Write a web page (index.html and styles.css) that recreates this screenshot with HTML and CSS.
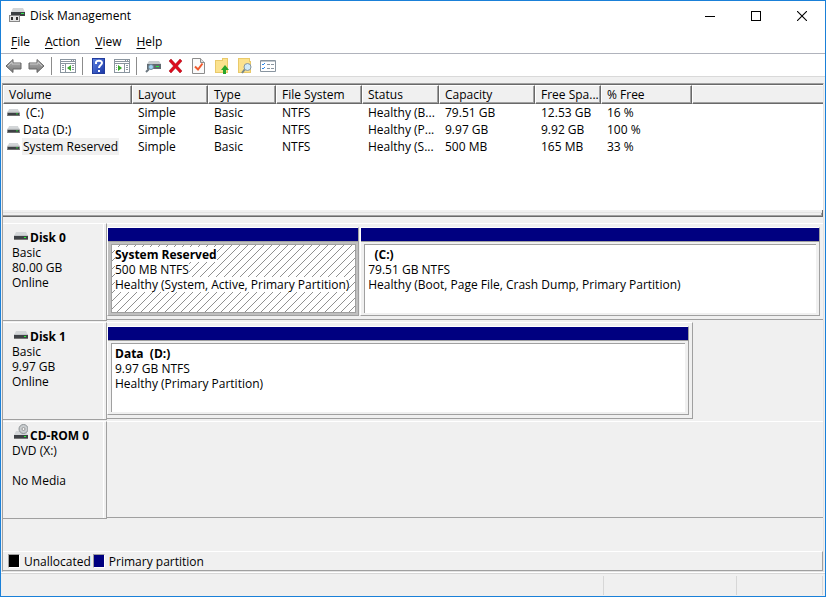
FILE: index.html
```html
<!DOCTYPE html>
<html lang="en">
<head>
<meta charset="utf-8">
<title>Disk Management</title>
<link rel="stylesheet" href="styles.css">
</head>
<body>
<svg class="defs" aria-hidden="true">
  <defs>
    <linearGradient id="arrow" x1="0" y1="0" x2="0" y2="1"><stop offset="0" stop-color="#b4b4b4"/><stop offset="1" stop-color="#777"/></linearGradient>
    <linearGradient id="blue" x1="0" y1="0" x2="1" y2="1"><stop offset="0" stop-color="#5a80e0"/><stop offset="1" stop-color="#1c39a8"/></linearGradient>
    <pattern id="hatch" width="8" height="8" patternUnits="userSpaceOnUse"><path d="M0 7h1v1H0zM1 6h1v1H1zM2 5h1v1H2zM3 4h1v1H3zM4 3h1v1H4zM5 2h1v1H5zM6 1h1v1H6zM7 0h1v1H7z" fill="#909090"/></pattern>
    <symbol id="drive" viewBox="0 0 14 8">
      <path d="M2 0h10l2 4H0z" fill="#d3d6d8"/>
      <path d="M0 4h14v4H0z" fill="#3e4145"/>
      <path d="M0 3h14v1H0z" fill="#c0c4c7"/>
      <path d="M0 7h14v1H0z" fill="#777"/>
      <path d="M10 5h2v1h-2z" fill="#20ff30"/>
    </symbol>
  </defs>
</svg>
<div class="window">
  <header class="titlebar">
    <svg class="app-icon" width="16" height="15" viewBox="0 0 16 15">
      <path d="M4 0h10l2 4H2z" fill="#d3d6d8"/><path d="M2 4h14v4H2z" fill="#3c4043"/><path d="M12 5h3v1h-3z" fill="#30e850"/>
      <path d="M0 7h11v7H0z" fill="#888"/><path d="M1 8h9v5H1z" fill="#e4e4e4"/><path d="M2 9h2v3H2zM7 9h2v3H7z" fill="#303030"/>
    </svg>
    <h1>Disk Management</h1>
    <div class="caption-buttons">
      <button aria-label="Minimize"><svg width="10" height="10"><path d="M0 5h10v1H0z"/></svg></button>
      <button aria-label="Maximize"><svg width="10" height="10"><path d="M0 0h10v10H0zM1 1v8h8V1z" fill-rule="evenodd"/></svg></button>
      <button aria-label="Close"><svg width="10" height="10"><path d="M0 0l10 10M10 0L0 10" fill="none" stroke="#000" stroke-width="1.1"/></svg></button>
    </div>
  </header>
  <nav class="menubar">
    <button><u>F</u>ile</button><button><u>A</u>ction</button><button><u>V</u>iew</button><button><u>H</u>elp</button>
  </nav>
  <div class="toolbar" role="toolbar">
    <button aria-label="Back"><svg width="17" height="16" viewBox="0 0 17 16"><path d="M1 8l7-6.500v3.500h8v6H8v3.500z" fill="url(#arrow)" stroke="#666"/><path d="M3 8l4-4v2h8" fill="none" stroke="#c8c8c8"/></svg></button>
    <button aria-label="Forward"><svg width="17" height="16" viewBox="0 0 17 16"><path d="M16 8L9 1.500v3.500H1v6h8v3.500z" fill="url(#arrow)" stroke="#666"/><path d="M2 6h8V4l4 4" fill="none" stroke="#c8c8c8"/></svg></button>
    <span class="separator"></span>
    <button aria-label="Show or hide console tree"><svg width="16" height="14" viewBox="0 0 16 14"><path d="M0 0h16v14H0z" fill="#8a959f"/><path d="M1 1h10v1H1zM12 1h1v1h-1zM14 1h1v1h-1zM1 3h14v1H1zM1 5h4v8H1zM6 5h9v8H6z" fill="#fff"/><path d="M2 6h2v1H2zM2 8h2v1H2zM2 10h2v1H2zM12 6h2v1h-2zM12 8h2v1h-2zM12 10h2v1h-2z" fill="#8a959f"/><path d="M11 6v6L7 9z" fill="#35a829"/></svg></button>
    <span class="separator"></span>
    <button aria-label="Help"><svg width="13" height="16" viewBox="0 0 13 16"><path d="M0 0h13v16H0z" fill="#233c9c"/><path d="M1 1h11v14H1z" fill="url(#blue)"/><path d="M4 6V4.500C4 2 10 2 10 5c0 2-3 2-3 5M7 12v2" fill="none" stroke="#fff" stroke-width="2"/></svg></button>
    <button aria-label="Show or hide action pane"><svg width="16" height="14" viewBox="0 0 16 14"><path d="M0 0h16v14H0z" fill="#8a959f"/><path d="M1 1h10v1H1zM12 1h1v1h-1zM14 1h1v1h-1zM1 3h14v1H1zM1 5h9v8H1zM11 5h4v8h-4z" fill="#fff"/><path d="M2 6h1v1H2zM2 8h1v1H2zM2 10h1v1H2zM12 6h2v1h-2zM12 8h2v1h-2zM12 10h2v1h-2z" fill="#8a959f"/><path d="M4 6v6l4-3z" fill="#35a829"/></svg></button>
    <span class="separator"></span>
    <button aria-label="Rescan disks"><svg width="16" height="14" viewBox="0 0 16 14"><path d="M4 2h10l2 3H2z" fill="#c7cccf"/><path d="M2 5h14v5H2z" fill="#606a70"/><path d="M11 7h3v1h-3z" fill="#20f040"/><path d="M4 10l-3 3" stroke="#6c7880" stroke-width="2"/><circle cx="6" cy="8" r="2.500" fill="#9fd5f5" stroke="#728998"/></svg></button>
    <button aria-label="Delete"><svg width="15" height="14" viewBox="0 0 15 14"><path d="M3 0l4.500 5L12 0l2 2-4.500 5L14 12l-2 2-4.500-5L3 14l-2-2 4.500-5L1 2z" fill="#dd0b1c" stroke="#9f0814" stroke-width=".5"/></svg></button>
    <button aria-label="Properties"><svg width="13" height="16" viewBox="0 0 13 16"><path d="M.5.500h8l4 4v11H.5z" fill="#fafafa" stroke="#8c8c8c"/><path d="M8.500.500v4h4" fill="#ddd" stroke="#8c8c8c"/><path d="M3 8.500l3 3 4.500-6" fill="none" stroke="#f0582b" stroke-width="2"/></svg></button>
    <button aria-label="Open parent folder"><svg width="14" height="16" viewBox="0 0 14 16"><path d="M0 2h7V0h6v15H0z" fill="#e9c96a"/><path d="M1 3h7V1h4v13H1z" fill="#fbe28e"/><path d="M10 7l4 5h-3v4H8v-4H6z" fill="#27a52a"/></svg></button>
    <button aria-label="Explore"><svg width="14" height="16" viewBox="0 0 14 16"><path d="M0 0h12v3h1v12H0z" fill="#e9c96a"/><path d="M1 1h10v3h1v10H1z" fill="#fbe28e"/><path d="M7 11l-3 4" stroke="#788" stroke-width="2"/><circle cx="9.500" cy="9" r="3.500" fill="#cfeafa" stroke="#86959d"/></svg></button>
    <button aria-label="View options"><svg width="16" height="14" viewBox="0 0 16 14"><path d="M.5 1.500h15v11H.5z" fill="#fff" stroke="#8995a0"/><path d="M1 2h14v1H1z" fill="#c2c9ce"/><path d="M2 5l1 1 2-2M2 9l1 1 2-2" fill="none" stroke="#2b87e8"/><path d="M7 5h3v1H7zM11 5h3v1h-3zM7 9h3v1H7zM11 9h3v1h-3z" fill="#8995a0"/></svg></button>
  </div>

  <main class="console">
    <section class="volume-list">
      <table>
        <colgroup><col class="w-volume"><col class="w-layout"><col class="w-type"><col class="w-fs"><col class="w-status"><col class="w-capacity"><col class="w-free"><col class="w-percent"><col></colgroup>
        <thead><tr><th>Volume</th><th>Layout</th><th>Type</th><th>File System</th><th>Status</th><th>Capacity</th><th>Free Spa...</th><th>% Free</th><th></th></tr></thead>
        <tbody>
          <tr><td class="name"><svg><use href="#drive"/></svg><span>&nbsp;(C:)</span></td><td>Simple</td><td>Basic</td><td>NTFS</td><td>Healthy (B...</td><td>79.51 GB</td><td>12.53 GB</td><td>16 %</td><td></td></tr>
          <tr><td class="name"><svg><use href="#drive"/></svg><span>Data (D:)</span></td><td>Simple</td><td>Basic</td><td>NTFS</td><td>Healthy (P...</td><td>9.97 GB</td><td>9.92 GB</td><td>100 %</td><td></td></tr>
          <tr><td class="name selected"><svg><use href="#drive"/></svg><span>System Reserved</span></td><td>Simple</td><td>Basic</td><td>NTFS</td><td>Healthy (S...</td><td>500 MB</td><td>165 MB</td><td>33 %</td><td></td></tr>
        </tbody>
      </table>
    </section>
    <div class="splitter"></div>

    <section class="disks">
      <article class="disk">
        <div class="disk-label"><h2><svg><use href="#drive"/></svg>Disk 0</h2><p>Basic</p><p>80.00 GB</p><p>Online</p></div>
        <div class="volumes">
          <div class="volume small active"><div class="bar"></div><div class="box"><svg class="hatch" aria-hidden="true"><rect width="100%" height="100%" fill="url(#hatch)"/></svg><h3>System Reserved</h3><p>500 MB NTFS</p><p>Healthy (System, Active, Primary Partition)</p></div></div>
          <div class="volume large"><div class="bar"></div><div class="box"><h3>&nbsp; (C:)</h3><p>79.51 GB NTFS</p><p>Healthy (Boot, Page File, Crash Dump, Primary Partition)</p></div></div>
        </div>
      </article>
      <article class="disk">
        <div class="disk-label"><h2><svg><use href="#drive"/></svg>Disk 1</h2><p>Basic</p><p>9.97 GB</p><p>Online</p></div>
        <div class="volumes partial">
          <div class="volume large"><div class="bar"></div><div class="box"><h3>Data&nbsp; (D:)</h3><p>9.97 GB NTFS</p><p>Healthy (Primary Partition)</p></div></div>
        </div>
      </article>
      <article class="disk">
        <div class="disk-label"><h2><svg class="cd" viewBox="0 0 14 15"><path d="M2 7h10l2 4H0z" fill="#d3d6d8"/><circle cx="9.500" cy="5" r="4.500" fill="#c9cdcf" stroke="#8d9295"/><circle cx="9.500" cy="5" r="1.500" fill="#f4f4f4" stroke="#999"/><path d="M0 11h14v3H0z" fill="#3e4145"/><path d="M0 14h14v1H0z" fill="#777"/><path d="M10 12h2v1h-2z" fill="#20ff30"/></svg>CD-ROM 0</h2><p>DVD (X:)</p><p>&nbsp;</p><p>No Media</p></div>
        <div class="volumes"></div>
      </article>
    </section>
    <footer class="legend"><span class="swatch unallocated"></span><span>Unallocated</span><span class="swatch primary"></span><span>Primary partition</span></footer>
  </main>
  <div class="statusbar"><span></span><span></span><span></span></div>
</div>
</body>
</html>
```
FILE: styles.css
```css
* { box-sizing: border-box; }
body {
  margin: 0;
  font: 12px/15px "Open Sans", "Noto Sans", sans-serif;
  color: #000;
  background: #f0f0f0;
}
h1, h2, h3, p { margin: 0; font-size: 12px; }
svg { display: block; flex: none; }
.defs { position: absolute; width: 0; height: 0; }
button { font: inherit; color: inherit; padding: 0; border: 0; background: none; }

.window {
  display: flex;
  flex-direction: column;
  min-height: 100vh;
  border: 1px solid #1a80d8;
}

.titlebar { display: flex; align-items: center; height: 29px; padding-left: 8px; background: #fff; }
.titlebar h1 { margin-left: 5px; font-weight: 400; }
.caption-buttons { display: flex; margin-left: auto; }
.caption-buttons button { display: grid; place-items: center; width: 46px; height: 28px; }

.menubar { display: flex; gap: 15px; height: 24px; padding-left: 10px; background: #fff; border-bottom: 1px solid #b0b3bc; }
.menubar u { text-underline-offset: 2px; }

.toolbar { display: flex; height: 23px; padding-left: 1px; background: #fff; border-bottom: 1px solid #d9d9d9; }
.toolbar button { display: grid; place-items: center; width: 23px; height: 24px; }
.separator { width: 1px; height: 18px; margin: 3px 4px 0 3px; background: #8c8c8c; }

.console {
  display: flex;
  flex-direction: column;
  flex: 1;
  margin: 6px 1px 1px;
  border: 1px solid #a0a0a0;
  border-right-color: #e3e3e3;
  border-bottom-color: #e3e3e3;
}

.volume-list { height: 126px; background: #fff; border-top: 1px solid #696969; }
table { width: 100%; table-layout: fixed; border-spacing: 0; }
th {
  height: 19px;
  padding: 0 5px;
  font-weight: 400;
  text-align: left;
  white-space: nowrap;
  background: #f0f0f0;
  border: 1px solid #696969;
  border-left-color: #fff;
  border-top-color: #fff;
  box-shadow: inset -1px -1px #a0a0a0;
}
td { height: 17px; padding: 0 6px; white-space: nowrap; }
th:last-child { border-right: 0; box-shadow: inset 0 -1px #a0a0a0; }
.name { display: flex; align-items: center; padding: 0 0 0 4px; }
.name svg { width: 13px; height: 7px; }
.name span { margin-left: 2px; padding: 1px; }
.selected span { background: #f0f0f0; }
.w-volume { width: 129px; }
.w-layout { width: 76px; }
.w-type { width: 68px; }
.w-fs { width: 86px; }
.w-status { width: 77px; }
.w-capacity { width: 96px; }
.w-free { width: 66px; }
.w-percent { width: 91px; }

.splitter {
  height: 7px;
  background: #f0f0f0;
  border-bottom: 1px solid #696969;
  border-right: 1px solid #696969;
  box-shadow: inset 0 2px #f0f0f0, inset 0 3px #e3e3e3, inset -1px -1px #a0a0a0;
}

.disks { flex: 1; padding-top: 6px; }
.disk { display: flex; min-height: 98px; margin-bottom: 1px; }
.disk-label {
  width: 104px;
  padding: 6px 9px;
  border: 1px solid #a0a0a0;
  border-top-color: #fff;
  border-left: 0;
  box-shadow: inset -2px 0 #f0f0f0, inset -3px 0 #fff;
}
.disk-label h2 { display: flex; align-items: center; position: relative; padding-left: 18px; }
.disk-label svg { position: absolute; left: 2px; top: 2px; width: 14px; height: 8px; }
.disk-label .cd { top: -4px; height: 15px; }

.volumes {
  display: flex;
  flex: 1;
  gap: 1px;
  margin-bottom: 1px;
  padding: 3px 3px 3px 0;
  border-top: 1px solid #fff;
  border-bottom: 1px solid #a0a0a0;
}
.partial { flex: 0 1 586px; border-right: 1px solid #a0a0a0; }
.volume {
  display: flex;
  flex-direction: column;
  min-width: 0;
  border: 1px solid #a0a0a0;
  border-top-color: #fff;
  border-left-color: #fff;
}
.small { flex: 252 1 0; }
.large { flex: 461 1 0; }
.bar { height: 14px; background: #000080; border-bottom: 1px solid #a0a0a0; }
.box {
  flex: 1;
  margin: 2px 3px;
  padding: 2px 3px;
  background-color: #fff;
  border-top: 1px solid #a0a0a0;
  border-left: 1px solid #a0a0a0;
  white-space: nowrap;
  overflow: hidden;
}
.active { background: #c0c0c0; }
.active .box {
  position: relative;
  margin: 2px 2px 2px 3px;
  border: 1px solid #a0a0a0;
}
.hatch { position: absolute; inset: 0; width: 100%; height: 100%; }
.active h3, .active p { position: relative; width: fit-content; background: #fff; }

.legend {
  display: flex;
  align-items: center;
  height: 20px;
  padding-left: 5px;
  border-top: 1px solid #fff;
  border-right: 1px solid #a0a0a0;
  border-bottom: 1px solid #a0a0a0;
}
.swatch { width: 12px; height: 14px; margin-right: 4px; border: 1px solid #a0a0a0; border-right-color: #fff; border-bottom-color: #fff; }
.unallocated { background: #000; }
.primary { margin-left: 2px; background: #000080; }

.statusbar { display: flex; height: 23px; padding: 2px 2px 1px 0; border-top: 1px solid #d7d7d7; box-shadow: 0 -1px #fff; }
.statusbar span { border-right: 1px solid #d7d7d7; }
.statusbar span:nth-child(1) { flex: 604; }
.statusbar span:nth-child(2) { flex: 133; }
.statusbar span:nth-child(3) { flex: 85; }
```
